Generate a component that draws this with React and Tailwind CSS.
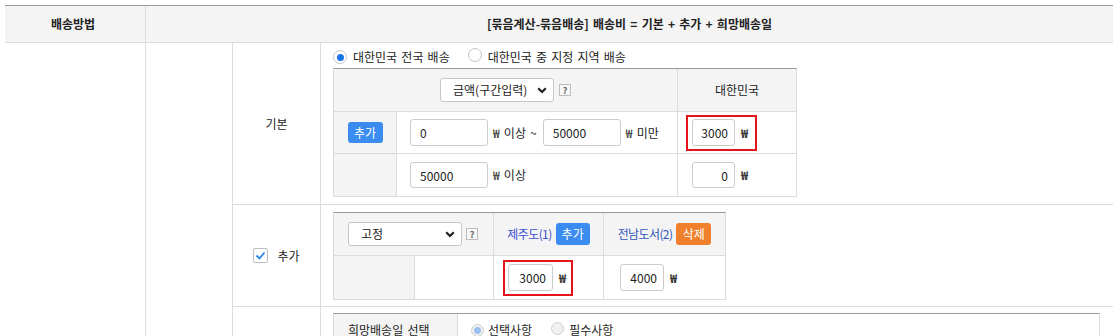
import React from "react";

const Radio = ({ checked, muted }) => (
  <span
    className={
      muted
        ? "inline-flex h-[13px] w-[13px] shrink-0 items-center justify-center rounded-full border border-[#cfcfcf] bg-[#f0f0f0]"
        : "inline-flex h-[14px] w-[14px] shrink-0 items-center justify-center rounded-full border border-[#c4c4c4] bg-white"
    }
  >
    {checked && (
      <span
        className={
          muted
            ? "h-[7px] w-[7px] rounded-full bg-[#9dc0f0]"
            : "h-[7px] w-[7px] rounded-full bg-[#1a73e8]"
        }
      />
    )}
  </span>
);

const Chevron = () => (
  <svg width="10" height="7" viewBox="0 0 10 7" className="shrink-0">
    <path d="M1.2 1.2l3.8 3.8L8.8 1.2" fill="none" stroke="#222" strokeWidth="2.2" />
  </svg>
);

const Help = () => (
  <span className="flex h-[12px] w-[12px] items-center justify-center border border-[#bdbdbd] bg-[#f7f7f7] text-[9px] font-bold leading-none text-[#666]">
    ?
  </span>
);

const Won = () => <span className="text-[12px] font-bold text-[#333]">₩</span>;

export default function App() {
  return (
    <div className="min-h-[336px] bg-white font-['Noto_Sans_CJK_KR','Noto_Sans',sans-serif] text-[12px] text-[#222] [word-spacing:1.5px]">
      <div className="ml-[5px] w-[1108px] pt-[5px]">
        {/* header */}
        <div className="flex h-[38px] border-t border-b border-t-[#9a9a9a] border-b-[#dcdcdc] bg-[#f4f4f4] font-bold">
          <div className="flex w-[141px] items-center justify-center border-r border-[#dcdcdc] pr-[4px]">배송방법</div>
          <div className="flex flex-1 items-center justify-center">
            [묶음계산-묶음배송] 배송비 = 기본 + 추가 + 희망배송일
          </div>
        </div>

        {/* body */}
        <div className="flex">
          <div className="w-[141px] border-r border-[#dcdcdc]" />
          <div className="w-[87px] border-r border-[#dcdcdc]" />
          <div className="flex flex-1 flex-col">
            {/* 기본 row */}
            <div className="flex h-[162px] border-b border-[#dcdcdc]">
              <div className="flex w-[88px] items-center justify-center border-r border-[#dcdcdc]">기본</div>
              <div className="flex flex-col pl-[12px]">
                <div className="flex h-[25px] items-center pt-[3px]">
                  <Radio checked />
                  <span className="ml-[6px]">대한민국 전국 배송</span>
                  <span className="ml-[18px]">
                    <Radio />
                  </span>
                  <span className="ml-[6px]">대한민국 중 지정 지역 배송</span>
                </div>
                <div className="w-[464px] border border-[#dcdcdc] border-t-[#9a9a9a]">
                  <div className="flex h-[43px] border-b border-[#dcdcdc] bg-[#f4f4f4]">
                    <div className="flex w-[344px] items-center justify-center gap-[5px] border-r border-[#dcdcdc]">
                      <div className="flex h-[24px] w-[114px] items-center justify-between rounded-[3px] border border-[#c6c6c6] bg-white pl-[12px] pr-[6px]">
                        <span className="[word-spacing:0px]">금액(구간입력)</span>
                        <Chevron />
                      </div>
                      <Help />
                    </div>
                    <div className="flex flex-1 items-center justify-center">대한민국</div>
                  </div>
                  <div className="flex h-[42px] border-b border-[#dcdcdc]">
                    <div className="flex w-[63px] items-center justify-center border-r border-[#dcdcdc] bg-[#f4f4f4]">
                      <span className="inline-flex h-[21px] w-[35px] items-center justify-center rounded-[3px] bg-[#3a8cf0] text-white">추가</span>
                    </div>
                    <div className="flex w-[281px] items-center border-r border-[#dcdcdc] pl-[13px]">
                      <input readOnly value="0" className="h-[27px] w-[78px] rounded-[3px] border border-[#cccccc] pl-[9px] text-[12px] outline-none" />
                      <span className="ml-[5px]">₩ 이상 ~</span>
                      <input readOnly value="50000" className="ml-[6px] h-[27px] w-[78px] rounded-[3px] border border-[#cccccc] pl-[9px] text-[12px] outline-none" />
                      <span className="ml-[5px]">₩ 미만</span>
                    </div>
                    <div className="flex flex-1 items-center pl-[8px]">
                      <div className="flex h-[36px] w-[71px] items-center border-2 border-[#e3141b] pl-[4px]">
                        <input readOnly value="3000" className="h-[27px] w-[43px] rounded-[3px] border border-[#cccccc] pr-[6px] text-right text-[12px] outline-none" />
                        <span className="ml-[6px]"><Won /></span>
                      </div>
                    </div>
                  </div>
                  <div className="flex h-[42px]">
                    <div className="w-[63px] border-r border-[#dcdcdc] bg-[#f4f4f4]" />
                    <div className="flex w-[281px] items-center border-r border-[#dcdcdc] pl-[13px]">
                      <input readOnly value="50000" className="h-[26px] w-[78px] rounded-[3px] border border-[#cccccc] pl-[9px] text-[12px] outline-none" />
                      <span className="ml-[5px]">₩ 이상</span>
                    </div>
                    <div className="flex flex-1 items-center pl-[8px]">
                      <div className="flex h-[36px] w-[71px] items-center border-2 border-transparent pl-[4px]">
                        <input readOnly value="0" className="h-[26px] w-[43px] rounded-[3px] border border-[#cccccc] pr-[6px] text-right text-[12px] outline-none" />
                        <span className="ml-[6px]"><Won /></span>
                      </div>
                    </div>
                  </div>
                </div>
              </div>
            </div>

            {/* 추가 row */}
            <div className="flex h-[102px] border-b border-[#dcdcdc]">
              <div className="flex w-[88px] items-center justify-center gap-[9px] border-r border-[#dcdcdc]">
                <span className="flex h-[15px] w-[15px] items-center justify-center rounded-[2px] border border-[#bdbdbd] bg-white">
                  <svg width="11" height="9" viewBox="0 0 11 9">
                    <path d="M1.5 4.5l3 3L9.5 1.5" fill="none" stroke="#2a86ee" strokeWidth="1.8" />
                  </svg>
                </span>
                <span>추가</span>
              </div>
              <div className="pl-[12px] pt-[7px]">
                <div className="w-[393px] border border-[#dcdcdc] border-t-[#9a9a9a]">
                  <div className="flex h-[43px] border-b border-[#dcdcdc] bg-[#f4f4f4]">
                    <div className="flex w-[160px] items-center gap-[4px] border-r border-[#dcdcdc] pl-[14px]">
                      <div className="flex h-[24px] w-[114px] items-center justify-between rounded-[3px] border border-[#c6c6c6] bg-white pl-[12px] pr-[6px]">
                        <span>고정</span>
                        <Chevron />
                      </div>
                      <Help />
                    </div>
                    <div className="flex w-[110px] items-center justify-center gap-[4px] border-r border-[#dcdcdc] [word-spacing:0px]">
                      <span className="tracking-[-0.6px] text-[#3a4fd0]">제주도(1)</span>
                      <span className="inline-flex h-[22px] w-[34px] items-center justify-center rounded-[3px] bg-[#3a8cf0] text-white">추가</span>
                    </div>
                    <div className="flex flex-1 items-center justify-center gap-[4px] [word-spacing:0px]">
                      <span className="tracking-[-0.6px] text-[#2f55b8]">전남도서(2)</span>
                      <span className="inline-flex h-[22px] w-[35px] items-center justify-center rounded-[3px] bg-[#f0802c] text-white">삭제</span>
                    </div>
                  </div>
                  <div className="flex h-[43px]">
                    <div className="w-[81px] border-r border-[#dcdcdc] bg-[#f4f4f4]" />
                    <div className="w-[79px] border-r border-[#dcdcdc]" />
                    <div className="flex w-[110px] items-center border-r border-[#dcdcdc] pl-[9px]">
                      <div className="flex h-[36px] w-[70px] items-center border-2 border-[#e3141b] pl-[3px]">
                        <input readOnly value="3000" className="h-[27px] w-[45px] rounded-[3px] border border-[#cccccc] pr-[6px] text-right text-[12px] outline-none" />
                        <span className="ml-[6px]"><Won /></span>
                      </div>
                    </div>
                    <div className="flex flex-1 items-center pl-[10px]">
                      <div className="flex h-[36px] w-[70px] items-center border-2 border-transparent pl-[4px]">
                        <input readOnly value="4000" className="h-[27px] w-[44px] rounded-[3px] border border-[#cccccc] pr-[6px] text-right text-[12px] outline-none" />
                        <span className="ml-[6px]"><Won /></span>
                      </div>
                    </div>
                  </div>
                </div>
              </div>
            </div>

            {/* 희망배송일 row */}
            <div className="flex">
              <div className="w-[88px] border-r border-[#dcdcdc]" />
              <div className="pl-[12px] pt-[6px]">
                <div className="flex h-[40px] w-[767px] border border-[#dcdcdc] border-t-[#9a9a9a]">
                  <div className="flex w-[124px] items-center border-r border-[#dcdcdc] bg-[#f4f4f4] pl-[14px] pb-[6px]">희망배송일 선택</div>
                  <div className="flex items-center pl-[13px] pb-[6px]">
                    <Radio checked muted />
                    <span className="ml-[4px]">선택사항</span>
                    <span className="ml-[19px]">
                      <Radio muted />
                    </span>
                    <span className="ml-[5px]">필수사항</span>
                  </div>
                </div>
              </div>
            </div>
          </div>
        </div>
      </div>
    </div>
  );
}
